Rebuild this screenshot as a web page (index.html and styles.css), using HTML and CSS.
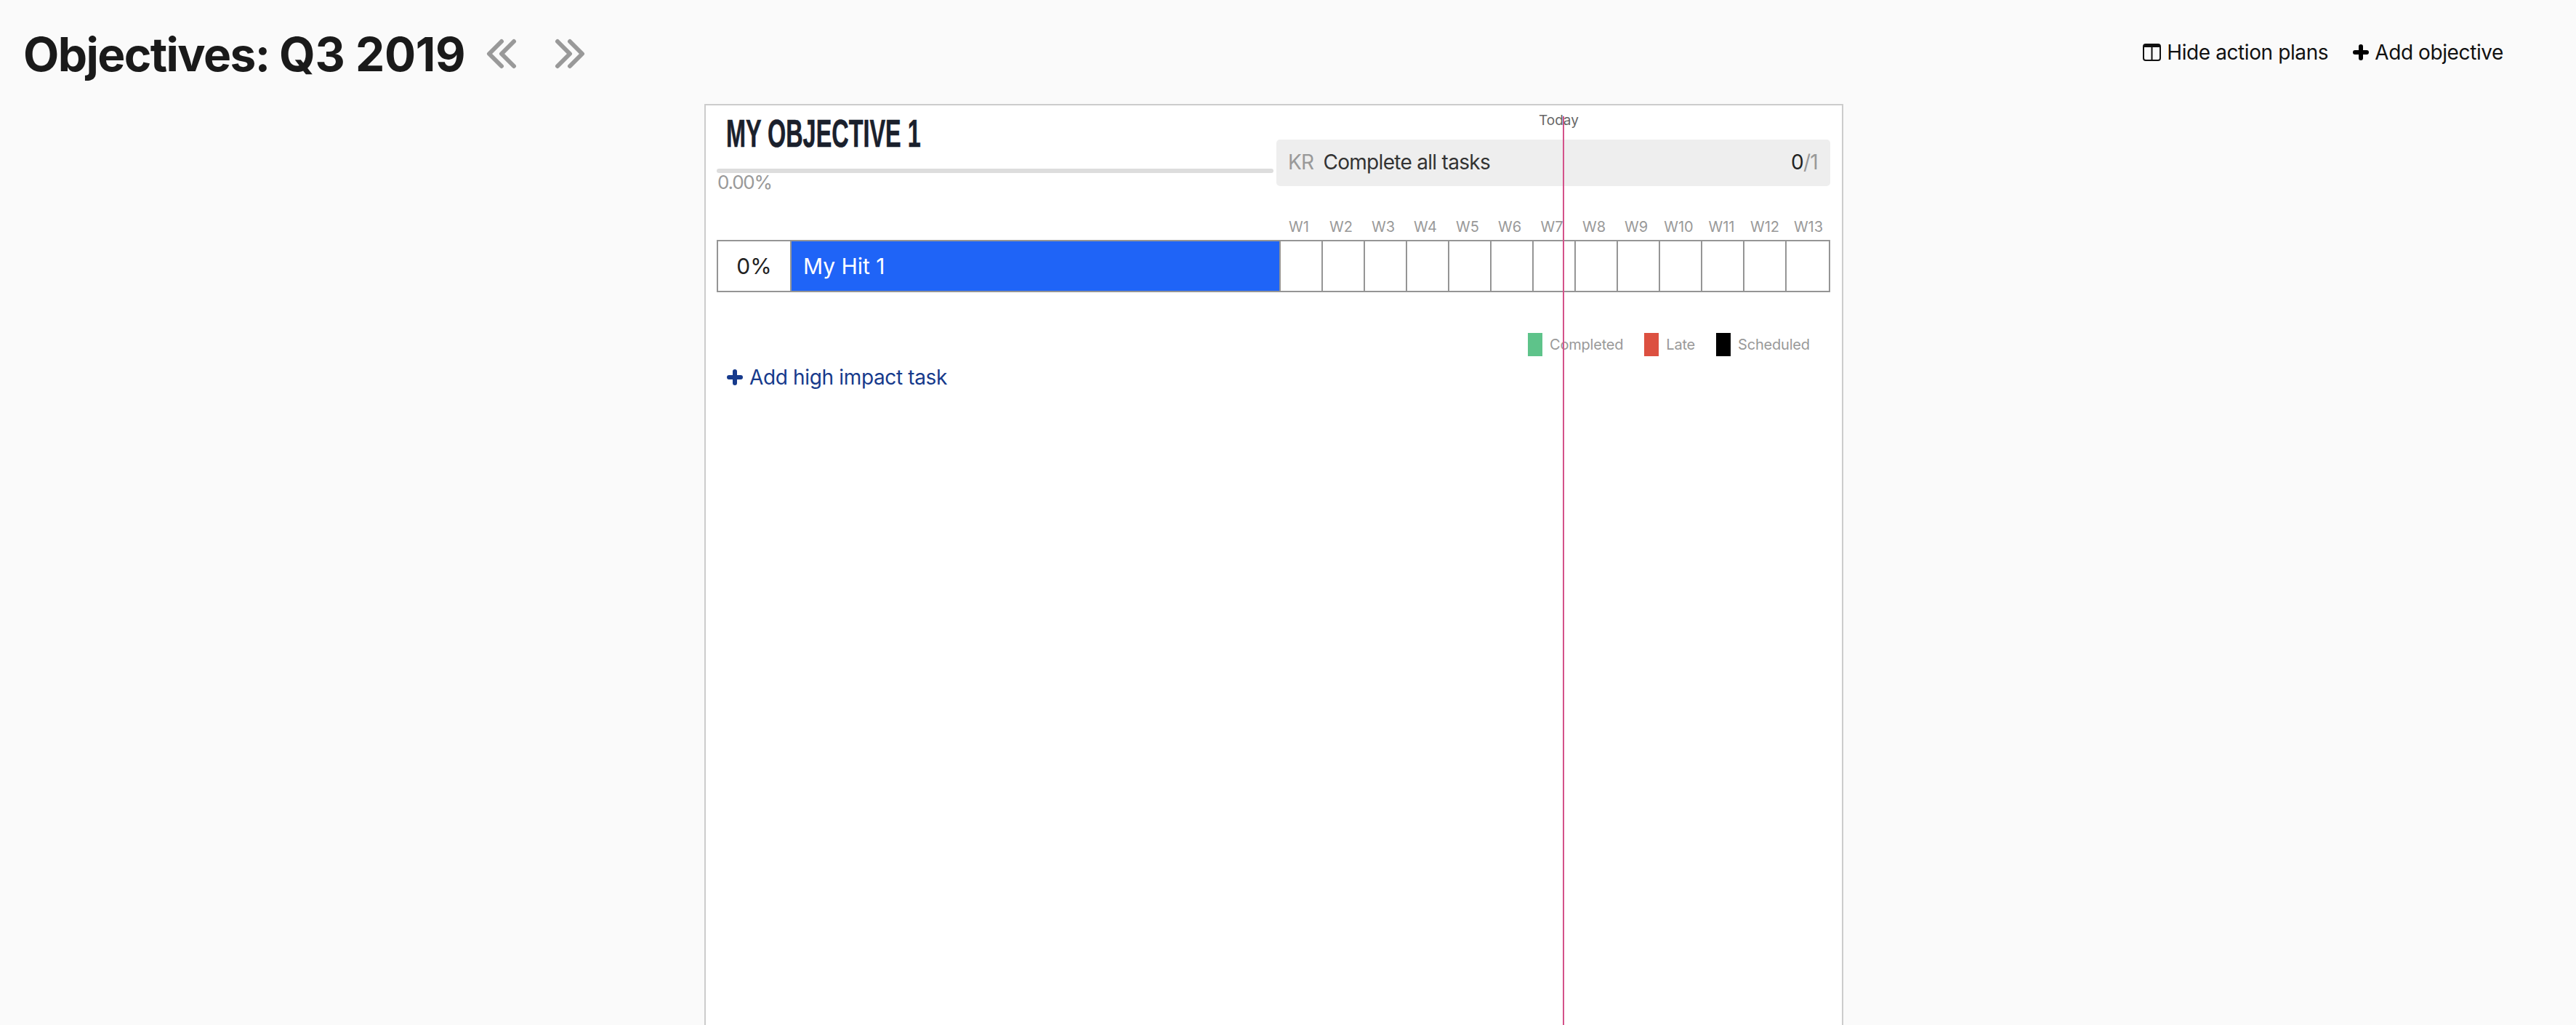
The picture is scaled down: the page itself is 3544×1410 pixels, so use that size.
FILE: index.html
```html
<!DOCTYPE html>
<html lang="en">
<head>
<meta charset="utf-8">
<title>Objectives</title>
<link rel="stylesheet" href="styles.css">
</head>
<body>
<header class="topbar">
  <div class="heading">
    <h1 class="page-title">Objectives: <span class="period">Q3 2019</span></h1>
    <a class="nav prev"><svg viewBox="0 0 44 44" width="44" height="44"><path d="M22 4 L5 21 L22 38 M39 4 L22 21 L39 38" fill="none" stroke="#999" stroke-width="6" stroke-linecap="round" stroke-linejoin="round"/></svg></a>
    <a class="nav next"><svg viewBox="0 0 44 44" width="44" height="44"><path d="M5 4 L22 21 L5 38 M22 4 L39 21 L22 38" fill="none" stroke="#999" stroke-width="6" stroke-linecap="round" stroke-linejoin="round"/></svg></a>
  </div>
  <div class="actions">
    <a class="action"><svg viewBox="0 0 25 24" width="25" height="24"><rect x="1" y="1" width="23" height="22" rx="3" fill="none" stroke="#111" stroke-width="2"/><path d="M2 1h21v4H2z" fill="#111"/><path d="M12.5 2v21" stroke="#111" stroke-width="2"/></svg>Hide action plans</a>
    <a class="action"><svg viewBox="0 0 22 22" width="22" height="22"><path d="M11 3v16M3 11h16" stroke="#000" stroke-width="6" stroke-linecap="round"/></svg>Add objective</a>
  </div>
</header>
<main class="card">
  <div class="today-line"><span class="today-label">Today</span></div>
  <div class="card-top">
    <div class="objective">
      <h2 class="obj-title">MY OBJECTIVE 1</h2>
      <div class="progress"></div>
      <div class="pct">0.00%</div>
    </div>
    <div class="kr">
      <span class="kr-tag">KR</span>
      <span class="kr-name">Complete all tasks</span>
      <span class="kr-count">0<span class="kr-total">/1</span></span>
    </div>
  </div>
  <div class="weeks">
    <span>W1</span><span>W2</span><span>W3</span><span>W4</span><span>W5</span><span>W6</span><span>W7</span><span>W8</span><span>W9</span><span>W10</span><span>W11</span><span>W12</span><span>W13</span>
  </div>
  <div class="hit">
    <div class="hit-pct">0%</div>
    <div class="hit-name">My Hit 1</div>
    <div class="cell"></div><div class="cell"></div><div class="cell"></div><div class="cell"></div><div class="cell"></div><div class="cell"></div><div class="cell"></div><div class="cell"></div><div class="cell"></div><div class="cell"></div><div class="cell"></div><div class="cell"></div><div class="cell"></div>
  </div>
  <div class="legend">
    <span class="swatch green"></span><span class="legend-label">Completed</span>
    <span class="swatch red"></span><span class="legend-label">Late</span>
    <span class="swatch black"></span><span class="legend-label">Scheduled</span>
  </div>
  <a class="add-task"><svg viewBox="0 0 22 22" width="22" height="22"><path d="M11 3v16M3 11h16" stroke="#163a8c" stroke-width="6" stroke-linecap="round"/></svg>Add high impact task</a>
</main>
</body>
</html>
```
FILE: styles.css
```css
* { box-sizing: border-box; }
html, body { margin: 0; height: 100%; overflow: hidden; }
body {
  background: #fafafa;
  font-family: Inter, "Liberation Sans", sans-serif;
  color: #1a1a1a;
  display: flex;
  flex-direction: column;
}
.topbar {
  display: flex;
  justify-content: space-between;
  align-items: flex-start;
  height: 143px;
  flex: none;
  padding: 37px 100px 0 32px;
}
.heading { display: flex; align-items: center; }
.page-title { margin: 0; font-size: 64px; font-weight: 700; line-height: 76px; color: #1a1a1a; letter-spacing: -1.6px; }
.period { letter-spacing: -0.4px; }
.nav { display: block; height: 44px; }
.prev { margin-left: 28px; }
.next { margin-left: 50px; }
.actions { display: flex; gap: 34px; margin-top: 18px; }
.action { display: flex; align-items: center; gap: 8px; font-size: 28px; color: #111; line-height: 34px; letter-spacing: -0.4px; }
.card {
  position: relative;
  flex: 1;
  width: 1567px;
  margin-left: 969px;
  background: #fff;
  border: 2px solid #ccc;
  border-bottom: 0;
  padding: 0 15px;
}
.today-line {
  position: absolute;
  left: 1179px;
  top: 15px;
  bottom: 0;
  width: 2px;
  background: #d4528a;
}
.today-label {
  position: absolute;
  left: -33px;
  top: -5px;
  font-size: 19px;
  line-height: 22px;
  color: #666;
}
.card-top { display: flex; height: 149px; }
.objective { width: 766px; flex: none; padding-top: 7px; }
.obj-title {
  margin: 0 0 0 13px;
  font-family: "Liberation Sans", sans-serif;
  font-size: 54px;
  font-weight: 700;
  line-height: 62px;
  color: #1a202c;
  white-space: nowrap;
  -webkit-text-stroke: 0.6px #1a202c;
  transform: scaleX(0.6);
  transform-origin: left center;
}
.progress { height: 6px; border-radius: 3px; background: #ddd; margin-top: 18px; }
.pct { font-size: 26px; line-height: 26px; color: #999; margin-left: 1px; letter-spacing: -1.2px; }
.kr {
  flex: none;
  width: 762px;
  height: 64px;
  margin: 47px 0 0 4px;
  padding: 0 16px 2px;
  display: flex;
  align-items: center;
  background: #eee;
  border-radius: 5px;
  font-size: 28px;
  letter-spacing: -0.7px;
}
.kr-tag { color: #999; }
.kr-name { margin-left: 13px; color: #333; flex: 1; }
.kr-count { color: #222; margin-right: 1px; }
.kr-total { color: #999; }
.weeks {
  display: grid;
  grid-template-columns: repeat(9, 58px) 59px 59px 60px 60px;
  justify-items: center;
  margin-left: 772px;
  height: 36px;
  padding-top: 6px;
  font-size: 20px;
  line-height: 24px;
  color: #999;
}
.hit {
  display: grid;
  grid-template-columns: 99px 673px repeat(12, 58px) 1fr;
  width: 1532px;
  height: 72px;
  border: 2px solid #959595;
}
.hit-pct { display: flex; align-items: center; justify-content: center; font-size: 30px; color: #222; }
.hit-name { display: flex; align-items: center; padding-left: 16px; background: #1f64f7; color: #fff; font-size: 30px; border-left: 2px solid #959595; }
.cell { border-left: 2px solid #959595; }
.legend {
  display: flex;
  align-items: center;
  margin: 56px 0 0 1116px;
  font-size: 20px;
  letter-spacing: -0.2px;
  color: #999;
  height: 32px;
}
.swatch { width: 20px; height: 32px; flex: none; }
.green { background: #5ec38a; }
.red { background: #dc5040; }
.black { background: #000; }
.legend-label { margin: 0 29px 0 10px; }
.add-task { display: flex; align-items: center; gap: 9px; margin: 11px 0 0 14px; font-size: 28px; color: #163a8c; line-height: 36px; letter-spacing: -0.35px; }
```
